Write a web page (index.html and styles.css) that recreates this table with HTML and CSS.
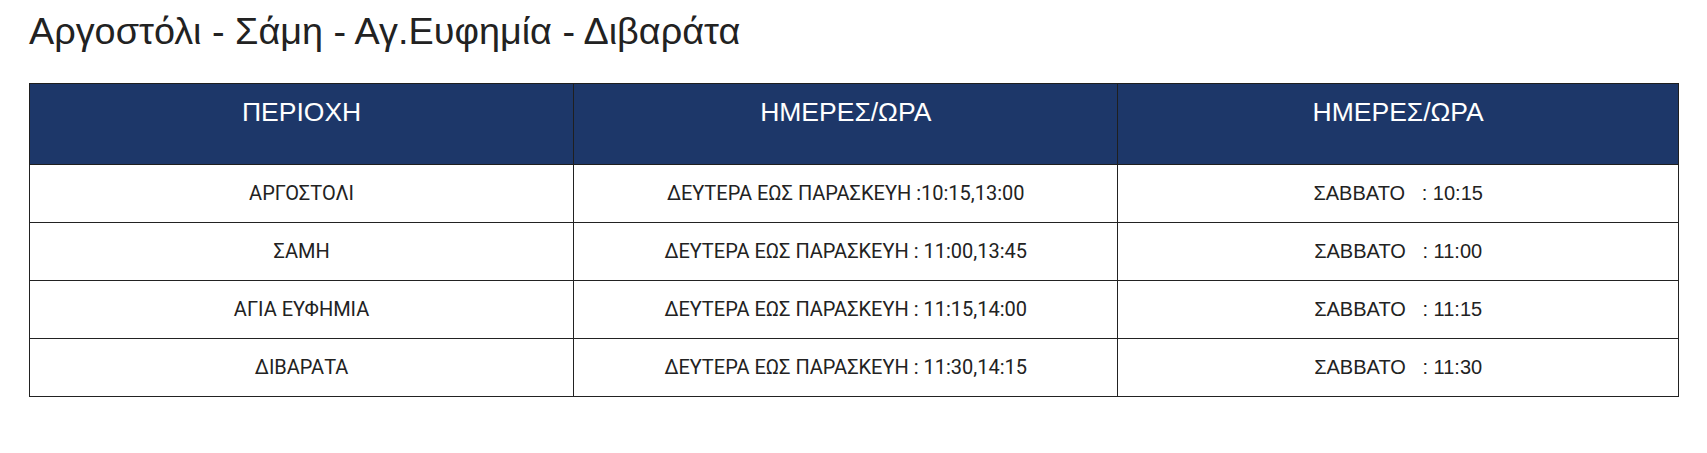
FILE: index.html
```html
<!DOCTYPE html>
<html lang="el">
<head>
<meta charset="utf-8">
<title>Δρομολόγια</title>
<link rel="stylesheet" href="styles.css">
</head>
<body>
<div class="stray"></div>
<main class="page">
  <h2 class="route-title">Αργοστόλι - Σάμη - Αγ.Ευφημία - Διβαράτα</h2>
  <table class="schedule">
    <colgroup>
      <col class="col-a">
      <col class="col-b">
      <col class="col-c">
    </colgroup>
    <thead>
      <tr>
        <th>ΠΕΡΙΟΧΗ</th>
        <th>ΗΜΕΡΕΣ/ΩΡΑ</th>
        <th>ΗΜΕΡΕΣ/ΩΡΑ</th>
      </tr>
    </thead>
    <tbody>
      <tr>
        <td class="roboto">ΑΡΓΟΣΤΟΛΙ</td>
        <td class="roboto">ΔΕΥΤΕΡΑ ΕΩΣ ΠΑΡΑΣΚΕΥΗ :10:15,13:00</td>
        <td class="arial">ΣΑΒΒΑΤΟ &nbsp; : 10:15</td>
      </tr>
      <tr>
        <td class="roboto">ΣΑΜΗ</td>
        <td class="roboto">ΔΕΥΤΕΡΑ ΕΩΣ ΠΑΡΑΣΚΕΥΗ : 11:00,13:45</td>
        <td class="arial">ΣΑΒΒΑΤΟ &nbsp; : 11:00</td>
      </tr>
      <tr>
        <td class="roboto">ΑΓΙΑ ΕΥΦΗΜΙΑ</td>
        <td class="roboto">ΔΕΥΤΕΡΑ ΕΩΣ ΠΑΡΑΣΚΕΥΗ : 11:15,14:00</td>
        <td class="arial">ΣΑΒΒΑΤΟ &nbsp; : 11:15</td>
      </tr>
      <tr>
        <td class="roboto">ΔΙΒΑΡΑΤΑ</td>
        <td class="roboto">ΔΕΥΤΕΡΑ ΕΩΣ ΠΑΡΑΣΚΕΥΗ : 11:30,14:15</td>
        <td class="arial">ΣΑΒΒΑΤΟ &nbsp; : 11:30</td>
      </tr>
    </tbody>
  </table>
</main>
</body>
</html>
```
FILE: styles.css
```css
html, body {
  background: #ffffff;
}
body {
  margin: 8px;
  font-family: "Liberation Sans", Arial, sans-serif;
  color: #222222;
  position: relative;
}
.stray {
  position: absolute;
  left: 9px;
  top: -7px;
  width: 10px;
  height: 2px;
  background: #a0a0a0;
  transform: rotate(-10deg);
}
.page {
  padding: 0 20px 0 21px;
}
.route-title {
  margin: 2px 0 0 0;
  font-family: "Liberation Sans", Arial, sans-serif;
  font-weight: 400;
  font-size: 37.8px;
  line-height: 42px;
  color: #222222;
}
.schedule {
  margin-top: 31px;
  width: 100%;
  border-collapse: collapse;
  border: 1px solid #6f6f6f;
}
.col-a, .col-b {
  width: 33%;
}
.schedule th {
  background: #1d3769;
  color: #ffffff;
  font-family: "Liberation Sans", Arial, sans-serif;
  font-weight: 400;
  font-size: 26.5px;
  line-height: 37px;
  padding: 10px 8px 33px;
  text-align: center;
  vertical-align: top;
  border: 1px solid #1f1f1f;
}
.schedule td {
  text-align: center;
  vertical-align: middle;
  padding: 15px 8px;
  line-height: 27px;
  font-size: 20px;
  color: #222222;
  border: 1px solid #222222;
}
.schedule .roboto {
  font-family: Roboto, "Noto Sans", sans-serif;
}
.schedule .arial {
  font-family: "Liberation Sans", Arial, sans-serif;
}
```
